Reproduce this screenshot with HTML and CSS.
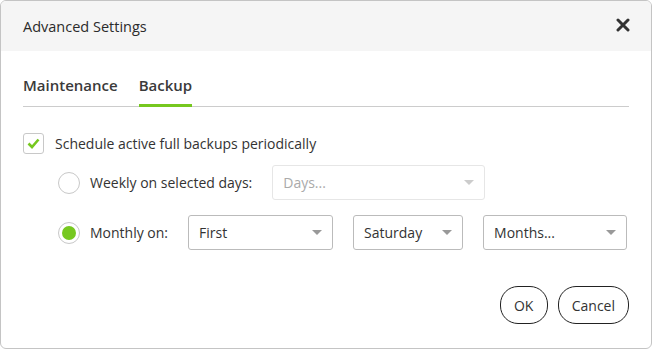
FILE: index.html
```html
<!DOCTYPE html>
<html lang="en">
<head>
    <meta charset="UTF-8">
    <title>Advanced Settings</title>
    <link rel="stylesheet" href="styles.css">
</head>
<body>
    <div class="dialog">
        <div class="dialog-header">
            <span class="dialog-title">Advanced Settings</span>
            <button class="close-btn" type="button" aria-label="Close">
                <svg width="14" height="14" viewBox="0 0 14 14"><path d="M2 2L12 12M12 2L2 12" stroke="#333" stroke-width="3" stroke-linecap="round"/></svg>
            </button>
        </div>

        <div class="dialog-body">
            <div class="tabs">
                <div class="tab">Maintenance</div>
                <div class="tab active">Backup</div>
            </div>

            <label class="check-row">
                <span class="checkbox">
                    <svg width="13" height="11" viewBox="0 0 13 11"><path d="M1.5 5.5L5 9L11.5 1.5" fill="none" stroke="#76c81f" stroke-width="2.6"/></svg>
                </span>
                Schedule active full backups periodically
            </label>

            <div class="option-row weekly">
                <span class="radio"></span>
                <span class="option-label">Weekly on selected days:</span>
                <div class="select disabled select-days"><span>Days...</span><i class="arrow"></i></div>
            </div>

            <div class="option-row monthly">
                <span class="radio checked"></span>
                <span class="option-label">Monthly on:</span>
                <div class="select select-first"><span>First</span><i class="arrow"></i></div>
                <div class="select select-day"><span>Saturday</span><i class="arrow"></i></div>
                <div class="select select-months"><span>Months...</span><i class="arrow"></i></div>
            </div>
        </div>

        <div class="dialog-footer">
            <button class="btn ok-btn" type="button">OK</button>
            <button class="btn" type="button">Cancel</button>
        </div>
    </div>
</body>
</html>
```

FILE: styles.css
```css
* {
    box-sizing: border-box;
}
body {
    margin: 0;
    font-family: 'Open Sans', sans-serif;
    font-size: 14px;
    color: #333;
    background: #fff;
}
.dialog {
    width: 652px;
    height: 349px;
    border: 1px solid #c4c4c4;
    border-radius: 6px;
    overflow: hidden;
    background: #fff;
    display: flex;
    flex-direction: column;
}
.dialog-header {
    height: 50px;
    flex-shrink: 0;
    background: #f5f5f5;
    display: flex;
    align-items: center;
    justify-content: space-between;
    padding: 0 20px 0 22px;
}
.dialog-title {
    font-size: 14.5px;
    color: #2b2b2b;
}
.close-btn {
    border: none;
    background: none;
    padding: 0;
    width: 16px;
    height: 16px;
    margin-top: -3px;
    display: flex;
    align-items: center;
    justify-content: center;
    cursor: pointer;
}
.dialog-body {
    flex: 1;
    padding: 0 22px;
}
.tabs {
    display: flex;
    gap: 21px;
    margin-top: 22px;
    border-bottom: 1px solid #ccc;
}
.tab {
    font-weight: 600;
    font-size: 15px;
    line-height: 24px;
    padding-bottom: 7px;
    border-bottom: 3px solid transparent;
    margin-bottom: -1px;
    color: #3a3a3a;
}
.tab.active {
    border-bottom-color: #76c81f;
}
.check-row {
    display: flex;
    align-items: center;
    gap: 11px;
    margin-top: 26px;
    line-height: 21px;
}
.checkbox {
    width: 21px;
    height: 21px;
    border: 1px solid #c8c8c8;
    border-radius: 3px;
    display: flex;
    align-items: center;
    justify-content: center;
}
.option-row {
    display: flex;
    align-items: center;
    gap: 20px;
    padding-left: 35px;
}
.option-row.weekly {
    margin-top: 11px;
}
.option-row.monthly {
    margin-top: 15px;
}
.radio {
    width: 22px;
    height: 22px;
    border: 1px solid #c8c8c8;
    border-radius: 50%;
    margin-right: -10px;
    display: flex;
    align-items: center;
    justify-content: center;
}
.radio.checked::after {
    content: "";
    width: 14px;
    height: 14px;
    border-radius: 50%;
    background: #76c81f;
}
.select {
    height: 35px;
    border: 1px solid #bbb;
    border-radius: 3px;
    display: flex;
    align-items: center;
    justify-content: space-between;
    padding: 0 10px;
    color: #333;
}
.select.disabled {
    border-color: #e6e6e6;
    color: #aaa;
}
.arrow {
    width: 0;
    height: 0;
    border-left: 5px solid transparent;
    border-right: 5px solid transparent;
    border-top: 5px solid #999;
}
.select.disabled .arrow {
    border-top-color: #ccc;
}
.select-days {
    width: 213px;
}
.select-first {
    width: 145px;
}
.select-day {
    width: 110px;
}
.select-months {
    width: 144px;
}
.dialog-footer {
    display: flex;
    justify-content: flex-end;
    gap: 10px;
    padding: 0 22px 24px;
}
.btn {
    height: 38px;
    border: 1px solid #222;
    border-radius: 18px;
    background: #fff;
    font-family: 'Open Sans', sans-serif;
    font-size: 14px;
    color: #333;
    padding: 0 13px;
    cursor: pointer;
}
.ok-btn {
    width: 48px;
}
```
